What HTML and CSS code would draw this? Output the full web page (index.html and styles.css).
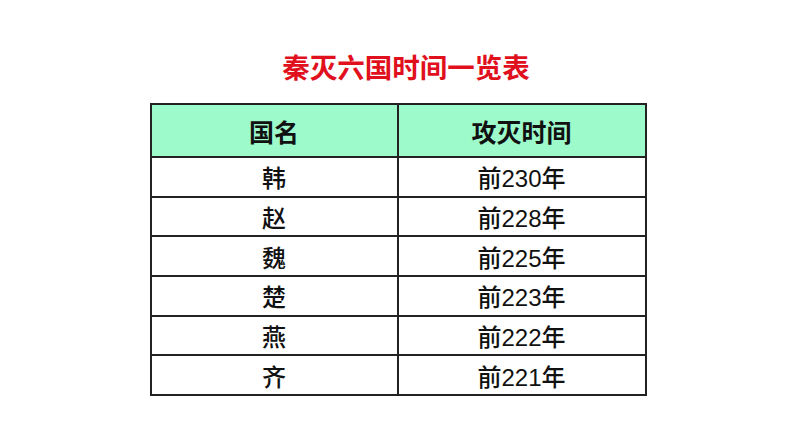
FILE: index.html
```html
<!DOCTYPE html>
<html lang="zh-CN">
<head>
<meta charset="utf-8">
<link rel="stylesheet" href="styles.css">
</head>
<body>
<div class="page">
  <h1 class="title">秦灭六国时间一览表</h1>
  <table class="tbl">
    <thead>
      <tr><th>国名</th><th>攻灭时间</th></tr>
    </thead>
    <tbody>
      <tr><td>韩</td><td>前230年</td></tr>
      <tr><td>赵</td><td>前228年</td></tr>
      <tr><td>魏</td><td>前225年</td></tr>
      <tr><td>楚</td><td>前223年</td></tr>
      <tr><td>燕</td><td>前222年</td></tr>
      <tr><td>齐</td><td>前221年</td></tr>
    </tbody>
  </table>
</div>
</body>
</html>
```
FILE: styles.css
```css
html, body {
  margin: 0;
  padding: 0;
  background: #ffffff;
}
.page {
  width: 794px;
  height: 447px;
  display: flex;
  flex-direction: column;
  align-items: center;
  font-family: "Liberation Sans", "Noto Sans CJK SC", sans-serif;
}
.title {
  margin: 53px 0 0 0;
  font-size: 27.5px;
  line-height: 32px;
  font-weight: bold;
  color: #e0101c;
  padding-left: 18px;
}
.tbl {
  margin-top: 18px;
  border-collapse: collapse;
  width: 497px;
  margin-left: 2px;
}
.tbl th, .tbl td {
  border: 2px solid #222222;
  text-align: center;
  padding: 0;
  color: #111111;
}
.tbl th {
  background: #9cfacb;
  height: 51px;
  font-size: 25px;
  font-weight: bold;
}
.tbl th:first-child, .tbl td:first-child {
  width: 245px;
}
.tbl td {
  height: 37.7px;
  font-size: 24px;
  font-weight: 500;
}
```
